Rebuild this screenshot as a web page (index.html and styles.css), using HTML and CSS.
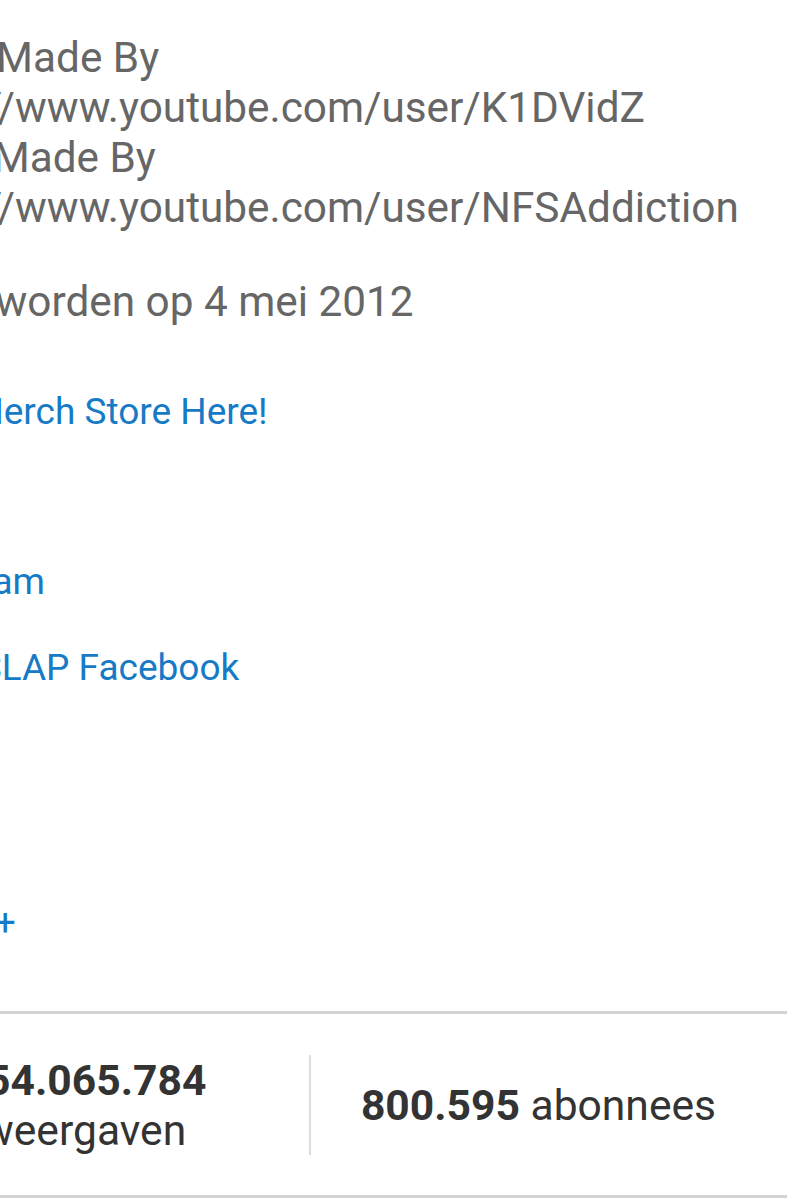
FILE: index.html
```html
<!DOCTYPE html>
<html lang="nl">
<head>
  <meta charset="UTF-8" />
  <meta name="viewport" content="width=device-width, initial-scale=1.0"/>
  <title>Over</title>
  <link rel="stylesheet" href="styles.css">
</head>
<body>
  <main class="page">
    <div class="sheet">
      <p class="description">
        Video Made By<br>
        https://www.youtube.com/user/K1DVidZ<br>
        Outro Made By<br>
        https://www.youtube.com/user/NFSAddiction
      </p>

      <p class="joined">Lid geworden op 4 mei 2012</p>

      <ul class="links">
        <li><a href="#">Shop Merch Store Here!</a></li>
        <li><a href="#">Twitter</a></li>
        <li><a href="#">Instagram</a></li>
        <li><a href="#">Team SLAP Facebook</a></li>
        <li><a href="#">Vine</a></li>
        <li><a href="#">Twitch</a></li>
        <li><a href="#">Google+</a></li>
      </ul>

      <div class="stats">
        <div class="stat">
          <strong>154.065.784</strong><br>weergaven
        </div>
        <div class="stat subs">
          <span><strong>800.595</strong> abonnees</span>
        </div>
      </div>
    </div>
  </main>
</body>
</html>
```

FILE: styles.css
```css
:root {
  --tekst: #666;
  --donker: #333;
  --link: #167ac6;
  --lijn: #d3d3d3;
}

* {
  box-sizing: border-box;
}

body {
  margin: 0;
  font-family: Roboto, "Noto Sans", Arial, sans-serif;
  background-color: #fff;
  color: var(--tekst);
}

.page {
  overflow: hidden;
  height: 1200px;
}

/* scrolled sideways: the left part of the card is off screen */
.sheet {
  margin-left: -141px;
  padding-top: 33px;
  font-size: 42.3px;
}

.description {
  margin: 0;
  padding-left: 19px;
  line-height: 50px;
}

.joined {
  margin: 44px 0 0;
  padding-left: 23px;
  line-height: 50px;
}

.links {
  list-style: none;
  margin: 42px 0 0;
  padding: 0 0 0 19px;
  font-size: 37px;
}

.links li {
  line-height: 85.2px;
}

.links a {
  color: var(--link);
  text-decoration: none;
}

.stats {
  display: grid;
  grid-template-columns: 450px 450px;
  align-items: center;
  margin-top: 46px;
  height: 187px;
  border-top: 3px solid var(--lijn);
  border-bottom: 3px solid var(--lijn);
  color: var(--donker);
  font-size: 42.6px;
}

.stat {
  text-align: center;
  line-height: 50px;
}

.stat.subs {
  display: flex;
  align-items: center;
  justify-content: center;
  height: 100px;
  padding-left: 7px;
  border-left: 2px solid #ddd;
}
```
